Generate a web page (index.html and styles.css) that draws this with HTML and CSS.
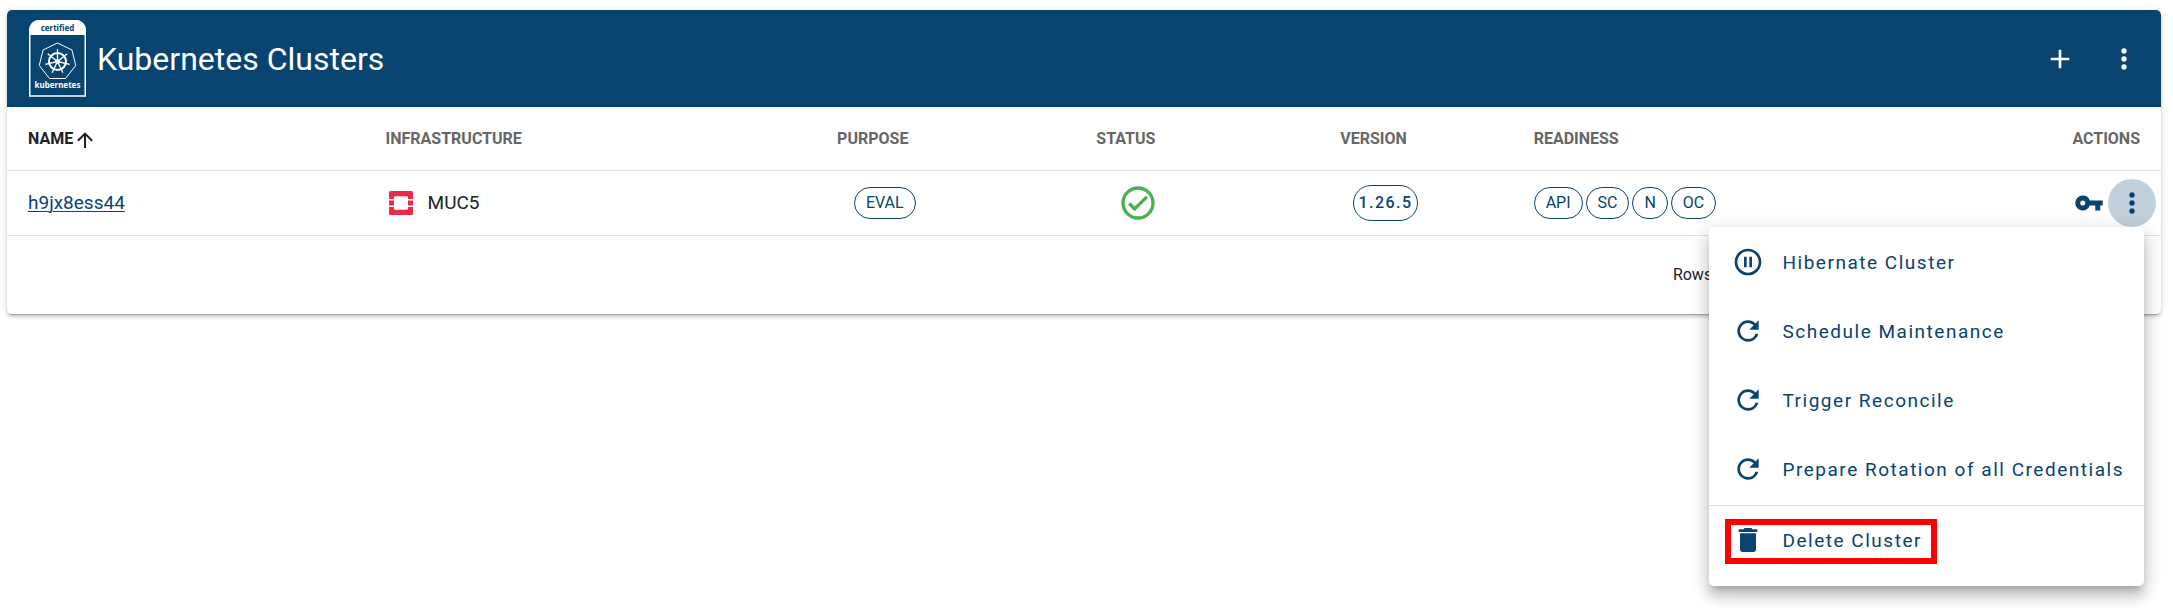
FILE: index.html
```html
<!DOCTYPE html>
<html lang="en">
<head>
<meta charset="utf-8">
<title>Kubernetes Clusters</title>
<link rel="stylesheet" href="styles.css">
</head>
<body>
<svg class="sprite" aria-hidden="true">
  <symbol id="dots" viewBox="0 0 24 24"><path d="M12 16a2 2 0 1 1 0 4 2 2 0 0 1 0-4m0-6a2 2 0 1 1 0 4 2 2 0 0 1 0-4m0-6a2 2 0 1 1 0 4 2 2 0 0 1 0-4z"/></symbol>
  <symbol id="refresh" viewBox="0 0 24 24"><path d="M17.65 6.35A7.958 7.958 0 0 0 12 4a8 8 0 0 0-8 8 8 8 0 0 0 8 8c3.73 0 6.84-2.55 7.73-6h-2.08A5.99 5.99 0 0 1 12 18a6 6 0 0 1-6-6 6 6 0 0 1 6-6c1.66 0 3.14.69 4.22 1.78L13 11h7V4l-2.35 2.35z"/></symbol>
</svg>
<main class="card">
  <header class="toolbar">
    <svg class="logo" viewBox="0 0 57 77" role="img" aria-label="Certified Kubernetes">
      <path class="logo-frame" d="M.75 14V10A9.25 9.25 0 0 1 10 .75h37A9.25 9.25 0 0 1 56.250 10v66H.75z"/>
      <path class="logo-cap" d="M0 15V10A10 10 0 0 1 10 0h37a10 10 0 0 1 10 10v5z"/>
      <text class="logo-cap-text" x="28.500" y="11">certified</text>
      <path class="logo-line" d="M28.500 23l14.500 7 3.700 15.500L36.500 58.500h-16L10.300 45.500 14 30z"/>
      <circle class="logo-wheel" cx="28.500" cy="41.500" r="8.500"/>
      <g class="logo-spokes">
        <path d="M28.500 41.500V29"/>
        <path d="M28.500 41.500V29" transform="rotate(51.430 28.500 41.500)"/>
        <path d="M28.500 41.500V29" transform="rotate(102.860 28.500 41.500)"/>
        <path d="M28.500 41.500V29" transform="rotate(154.290 28.500 41.500)"/>
        <path d="M28.500 41.500V29" transform="rotate(205.710 28.500 41.500)"/>
        <path d="M28.500 41.500V29" transform="rotate(257.140 28.500 41.500)"/>
        <path d="M28.500 41.500V29" transform="rotate(308.570 28.500 41.500)"/>
      </g>
      <circle class="logo-hub" cx="28.500" cy="41.500" r="2.500"/>
      <text class="logo-name" x="28.500" y="68">kubernetes</text>
    </svg>
    <h1 class="title">Kubernetes Clusters</h1>
    <button class="tool-button" type="button" aria-label="Create cluster"><svg class="icon" viewBox="0 0 24 24"><path d="M19 13h-6v6h-2v-6H5v-2h6V5h2v6h6z"/></svg></button>
    <button class="tool-button" type="button" aria-label="Table options"><svg class="icon"><use href="#dots"/></svg></button>
  </header>
  <table class="clusters">
    <colgroup>
      <col class="col-name"><col class="col-infra"><col class="col-purpose"><col class="col-status"><col class="col-version"><col class="col-ready"><col class="col-actions">
    </colgroup>
    <thead>
      <tr>
        <th class="sorted" aria-sort="ascending">NAME<svg class="sort" viewBox="0 0 24 24"><path d="M13 20h-2V8l-5.500 5.500-1.420-1.420L12 4.160l7.920 7.920-1.420 1.420L13 8v12z"/></svg></th>
        <th>INFRASTRUCTURE</th>
        <th class="center">PURPOSE<span class="sort"></span></th>
        <th class="center">STATUS<span class="sort"></span></th>
        <th class="center">VERSION<span class="sort"></span></th>
        <th>READINESS</th>
        <th class="end">ACTIONS</th>
      </tr>
    </thead>
    <tbody>
      <tr>
        <td><a class="link" href="#">h9jx8ess44</a></td>
        <td>
          <div class="infra">
            <svg class="openstack" viewBox="0 0 24 24" aria-hidden="true"><path d="M1.500 0h21A1.500 1.500 0 0 1 24 1.500V8h-5V6.500A1.300 1.300 0 0 0 17.700 5.200H6.300A1.300 1.300 0 0 0 5 6.500V8H0V1.500A1.500 1.500 0 0 1 1.500 0zM0 9.500h5v5H0zM19 9.500h5v5h-5zM0 16h5v1.500a1.300 1.300 0 0 0 1.300 1.300h11.400a1.300 1.300 0 0 0 1.300-1.300V16h5v6.500a1.500 1.500 0 0 1-1.500 1.500h-21A1.500 1.500 0 0 1 0 22.500z"/></svg>
            MUC5
          </div>
        </td>
        <td class="center"><span class="chip">EVAL</span></td>
        <td class="center"><svg class="status" viewBox="0 0 24 24" role="img" aria-label="Healthy"><path d="M12 2a10 10 0 1 0 0 20 10 10 0 0 0 0-20m0 18a8 8 0 1 1 0-16 8 8 0 0 1 0 16m4.590-12.420L10 14.170l-2.590-2.580L6 13l4 4 8-8z"/></svg></td>
        <td class="center"><button class="version" type="button">1.26.5</button></td>
        <td><div class="chips"><span class="chip">API</span><span class="chip">SC</span><span class="chip">N</span><span class="chip">OC</span></div></td>
        <td class="actions-cell">
          <div class="actions">
            <button class="key-button" type="button" aria-label="Show access"><svg class="icon key" viewBox="0 0 24 24"><path d="M12.650 10A5.990 5.990 0 0 0 7 6a6 6 0 1 0 0 12c2.610 0 4.830-1.670 5.650-4H17v4h4v-4h2v-4H12.650zM7 14a2 2 0 1 1 0-4 2 2 0 0 1 0 4z"/></svg></button>
            <button class="more-button" type="button" aria-label="Cluster actions" aria-expanded="true"><svg class="icon"><use href="#dots"/></svg></button>
            <div class="menu" role="menu">
              <button class="menu-item" type="button" role="menuitem"><svg class="icon" viewBox="0 0 24 24"><path d="M13 16V8h2v8h-2m-4 0V8h2v8H9m3-14a10 10 0 1 1 0 20 10 10 0 0 1 0-20m0 2a8 8 0 1 0 0 16 8 8 0 0 0 0-16z"/></svg>Hibernate Cluster</button>
              <button class="menu-item" type="button" role="menuitem"><svg class="icon"><use href="#refresh"/></svg>Schedule Maintenance</button>
              <button class="menu-item" type="button" role="menuitem"><svg class="icon"><use href="#refresh"/></svg>Trigger Reconcile</button>
              <button class="menu-item" type="button" role="menuitem"><svg class="icon"><use href="#refresh"/></svg>Prepare Rotation of all Credentials</button>
              <hr class="divider">
              <button class="menu-item highlighted" type="button" role="menuitem"><svg class="icon" viewBox="0 0 24 24"><path d="M19 4h-3.500l-1-1h-5l-1 1H5v2h14M6 19a2 2 0 0 0 2 2h8a2 2 0 0 0 2-2V7H6v12z"/></svg>Delete Cluster</button>
            </div>
          </div>
        </td>
      </tr>
    </tbody>
  </table>
  <footer class="footer"><span>Rows per page:</span></footer>
</main>
</body>
</html>
```
FILE: styles.css
```css
:root {
  --primary: #09436f;
  --line: #e2e2e2;
}

*,
*::after {
  box-sizing: border-box;
}

body {
  min-height: 100vh;
  margin: 0;
  padding: 10px 12px 10px 7px;
  background: #fff;
  color: #212121;
  font-family: Roboto, "Liberation Sans", sans-serif;
  font-size: 19px;
}

button {
  margin: 0;
  padding: 0;
  border: 0;
  background: none;
  color: inherit;
  font: inherit;
  cursor: pointer;
}

svg {
  fill: currentColor;
}

.sprite {
  position: absolute;
  width: 0;
  height: 0;
}

.icon {
  display: block;
  flex: none;
  width: 32px;
  height: 32px;
}

.card {
  border-radius: 5px;
  background: #fff;
  box-shadow: 0 4px 1px -3px rgba(0, 0, 0, .2), 0 3px 3px 0 rgba(0, 0, 0, .14), 0 1px 7px 0 rgba(0, 0, 0, .12);
}

.toolbar {
  display: flex;
  align-items: center;
  height: 97px;
  padding: 0 5px 0 22px;
  border-radius: 5px 5px 0 0;
  background: var(--primary);
  color: #fff;
}

.logo {
  flex: none;
  width: 57px;
  height: 77px;
}

.logo-frame,
.logo-line,
.logo-wheel,
.logo-spokes {
  fill: none;
  stroke: #fff;
}

.logo-frame {
  stroke-width: 1.5;
}

.logo-line {
  stroke-width: 1;
  stroke-linejoin: round;
}

.logo-wheel {
  stroke-width: 2;
}

.logo-spokes {
  stroke-width: 1.3;
}

.logo-cap-text,
.logo-name {
  font-family: "Noto Sans", sans-serif;
  font-size: 8px;
  font-weight: 700;
  text-anchor: middle;
}

.logo-cap-text {
  fill: var(--primary);
}

.title {
  flex: 1;
  margin: 0 0 0 11px;
  font-size: 32px;
  font-weight: 400;
}

.tool-button {
  display: grid;
  place-items: center;
  width: 64px;
  height: 64px;
}

.clusters {
  width: 100%;
  border-collapse: collapse;
  table-layout: fixed;
}

.col-name { width: 16.6%; }
.col-infra { width: 18%; }
.col-purpose { width: 12.3%; }
.col-status { width: 11.2%; }
.col-version { width: 11.8%; }
.col-ready { width: 18%; }

th,
td {
  height: 65px;
  padding: 0 21px;
  border-bottom: 1px solid var(--line);
  text-align: left;
  vertical-align: middle;
}

th {
  height: 63px;
  color: #666;
  font-size: 16px;
  font-weight: 700;
  white-space: nowrap;
}

.sorted {
  color: #212121;
}

.center {
  text-align: center;
}

.end {
  text-align: right;
}

.sort {
  display: inline-block;
  width: 24px;
  height: 24px;
  margin: -4px 0;
  vertical-align: middle;
}

.link {
  color: var(--primary);
  text-underline-offset: 2px;
  text-decoration-thickness: 1px;
}

.infra {
  display: flex;
  align-items: center;
  gap: 15px;
  padding-left: 3px;
}

.openstack {
  width: 24px;
  height: 24px;
  fill: #ed2849;
}

.chip {
  display: inline-block;
  padding: 0 11px;
  border: 1px solid var(--primary);
  border-radius: 16px;
  color: var(--primary);
  font-size: 16px;
  line-height: 30px;
}

.chips {
  display: flex;
  gap: 3px;
}

.status {
  display: block;
  width: 40px;
  height: 40px;
  margin: 0 auto;
  fill: #4caf50;
}

.version {
  padding: 0 5px;
  border: 1px solid var(--primary);
  border-radius: 18px;
  color: var(--primary);
  font-size: 16px;
  font-weight: 500;
  letter-spacing: .09em;
  line-height: 34px;
}

.actions-cell {
  padding-right: 5px;
}

.actions {
  position: relative;
  display: flex;
  align-items: center;
  justify-content: flex-end;
  gap: 4px;
  color: var(--primary);
}

.key-button {
  display: grid;
  place-items: center;
  width: 30px;
  height: 48px;
}

.key {
  width: 30px;
  height: 30px;
}

.more-button {
  display: grid;
  place-items: center;
  width: 48px;
  height: 48px;
  border-radius: 50%;
  background: #c1d0db;
}

.menu {
  position: absolute;
  top: 100%;
  right: 12px;
  z-index: 2;
  padding: 1px 0 11px;
  border-radius: 5px;
  background: #fff;
  box-shadow: 0 7px 7px -4px rgba(0, 0, 0, .2), 0 11px 13px 1px rgba(0, 0, 0, .14), 0 4px 19px 3px rgba(0, 0, 0, .12);
}

.menu-item {
  position: relative;
  display: flex;
  align-items: center;
  gap: 18px;
  width: 100%;
  height: 69px;
  padding: 0 20px 0 23px;
  letter-spacing: .08em;
  white-space: nowrap;
}

.divider {
  height: 1px;
  margin: 1px 0 0;
  border: 0;
  background: #dedede;
}

.highlighted::after {
  content: "";
  position: absolute;
  top: 13px;
  left: 16px;
  width: 212px;
  height: 45px;
  border: 6px solid #f00;
}

.footer {
  display: flex;
  align-items: center;
  justify-content: flex-end;
  height: 78px;
  padding-right: 379px;
  font-size: 16px;
}
```
